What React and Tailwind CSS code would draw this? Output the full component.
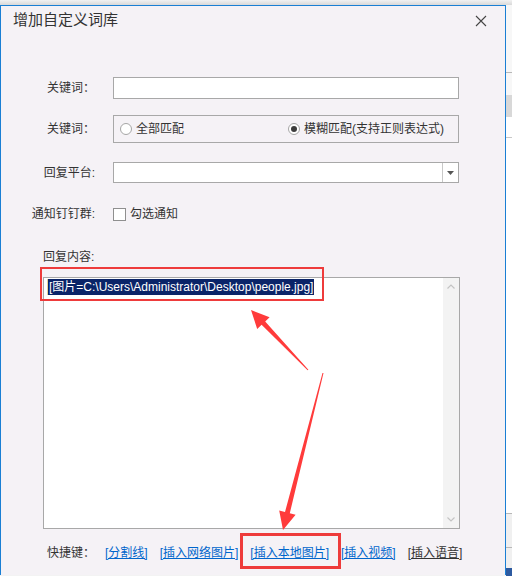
import React from "react";

const font = { fontFamily: '"Liberation Sans", "Noto Sans CJK SC", sans-serif' };

function Radio({ checked }) {
  return (
    <span className="w-[12px] h-[12px] rounded-full border border-[#a6a6a6] bg-white flex items-center justify-center shrink-0">
      {checked && <span className="w-[6px] h-[6px] rounded-full bg-[#3c3c3c]" />}
    </span>
  );
}

function Label({ children }) {
  return <div className="w-[94px] text-right shrink-0 text-[12px] text-[#333]">{children}</div>;
}

const links = [
  { t: "[分割线]", c: "text-[#0066cc]" },
  { t: "[插入网络图片]", c: "text-[#0066cc]" },
  { t: "[插入本地图片]", c: "text-[#0066cc]" },
  { t: "[插入视频]", c: "text-[#0066cc]" },
  { t: "[插入语音]", c: "text-[#333]" },
];

export default function App() {
  return (
    <div className="relative w-[512px] h-[576px] overflow-hidden bg-[#f3f3f3]" style={font}>
      <div className="h-[5px] bg-gradient-to-b from-[#f2f2f2] to-[#d9d9d9]" />
      <div className="flex h-[571px]">
        {/* dialog */}
        <div className="w-[506px] h-[570px] border-t border-l border-r border-[#1a7fd4] border-b-0 bg-[#f5f2f6] flex flex-col">
          <div className="h-[29px] flex items-center justify-between pl-[12px] pr-[18px]">
            <span className="text-[15px] text-[#333]">增加自定义词库</span>
            <svg width="12" height="12" viewBox="0 0 12 12">
              <path d="M1 1L11 11M11 1L1 11" stroke="#444" strokeWidth="1.1" />
            </svg>
          </div>

          <div className="flex items-center mt-[42px] gap-[18px]">
            <Label>关键词：</Label>
            <div className="w-[346px] h-[22px] bg-white border border-[#a8a8a8]" />
          </div>

          <div className="flex items-center mt-[16px] gap-[18px]">
            <Label>关键词：</Label>
            <div className="w-[346px] h-[28px] border border-[#a8a8a8] flex items-center pl-[6px] text-[12px] text-[#333] whitespace-nowrap">
              <Radio />
              <span className="ml-[4px] shrink-0">全部匹配</span>
              <span className="ml-[104px] shrink-0"><Radio checked /></span>
              <span className="ml-[4px] shrink-0">模糊匹配(支持正则表达式)</span>
            </div>
          </div>

          <div className="flex items-center mt-[19px] gap-[18px]">
            <Label>回复平台:</Label>
            <div className="w-[346px] h-[21px] bg-white border border-[#a8a8a8] flex justify-end">
              <div className="w-[16px] border-l border-[#c8c8c8] flex items-center justify-center">
                <svg width="7" height="4" viewBox="0 0 7 4">
                  <path d="M0 0H7L3.5 4Z" fill="#555" />
                </svg>
              </div>
            </div>
          </div>

          <div className="flex items-center mt-[21px] gap-[18px] h-[20px]">
            <Label>通知钉钉群:</Label>
            <div className="flex items-center text-[12px] text-[#333]">
              <span className="w-[13px] h-[13px] bg-white border border-[#8f8f8f]" />
              <span className="ml-[4px]">勾选通知</span>
            </div>
          </div>

          <div className="mt-[25px] pl-[42px] text-[12px] text-[#333] leading-[16px]">回复内容:</div>

          <div className="ml-[42px] mt-[12px] w-[417px] h-[252px] bg-white border border-[#a8a8a8] flex">
            <div className="flex-1 pt-[1px] pl-[3px]">
              <div className="flex items-center">
                <span className="w-[1px] h-[16px] bg-[#e8d69a]" />
                <span className="bg-[#0a2468] text-white text-[12px] leading-[16px] px-[1px] whitespace-nowrap">
                  [图片=C:\Users\Administrator\Desktop\people.jpg]
                </span>
              </div>
            </div>
            <div className="w-[16px] bg-[#f3f3f3] flex flex-col items-center justify-between py-[6px]">
              <svg width="8" height="5" viewBox="0 0 8 5">
                <path d="M0.5 4.5L4 1L7.5 4.5" stroke="#c4c4c4" fill="none" strokeWidth="1.2" />
              </svg>
              <svg width="8" height="5" viewBox="0 0 8 5">
                <path d="M0.5 0.5L4 4L7.5 0.5" stroke="#c4c4c4" fill="none" strokeWidth="1.2" />
              </svg>
            </div>
          </div>

          <div className="flex items-center mt-[15px] pl-[46px] text-[12px] whitespace-nowrap">
            <span className="text-[#333] w-[58px] shrink-0">快捷键：</span>
            <div className="flex gap-[12px]">
              {links.map((l) => (
                <span key={l.t} className={`${l.c} underline`}>{l.t}</span>
              ))}
            </div>
          </div>
        </div>

        {/* background app strip */}
        <div className="flex-1 flex flex-col bg-white">
          <div className="h-[67px] bg-[#f7f7f7]" />
          <div className="h-[1px] bg-[#b8b8b8]" />
          <div className="h-[22px] bg-[#f7f7f7]" />
          <div className="h-[22px] bg-[#d8d8d8]" />
          <div className="h-[20px] bg-white" />
          <div className="h-[1px] bg-[#c8c8c8]" />
          <div className="flex-1 bg-white" />
          <div className="h-[1px] bg-[#b8b8b8]" />
          <div className="h-[33px] bg-[#f0f0f0]" />
          <div className="h-[1px] bg-[#b8b8b8]" />
          <div className="h-[20px] bg-[#f0f0f0]" />
          <div className="h-[8px] bg-[#2d5aa0]" />
        </div>
      </div>

      {/* annotations */}
      <div className="absolute left-[40px] top-[267px] w-[284px] h-[34px] border-2 border-[#ee3b3b]" />
      <div className="absolute left-[240px] top-[533px] w-[101px] h-[36px] border-[3px] border-[#ee3b3b]" />
      <svg className="absolute left-0 top-0" width="512" height="576" viewBox="0 0 512 576">
        <polygon
          points="251,310 269.6,317.3 265.2,321.4 308.4,369.7 307.6,370.3 261.6,324.8 257.2,329.0"
          fill="#ff3b3b"
        />
        <polygon
          points="283,530 279.2,510.5 285.0,512.0 322.5,372.9 323.5,373.1 289.8,513.2 295.6,514.7"
          fill="#ff3b3b"
        />
      </svg>
    </div>
  );
}
